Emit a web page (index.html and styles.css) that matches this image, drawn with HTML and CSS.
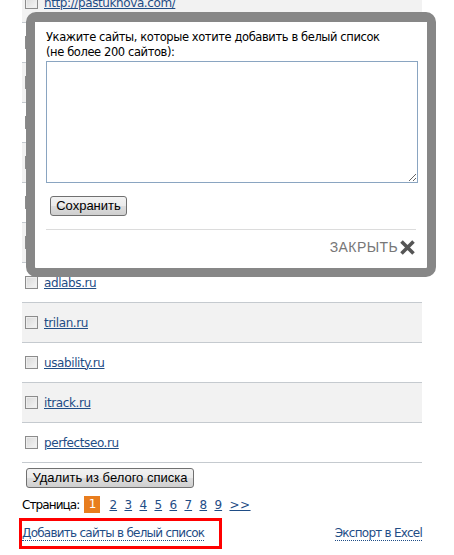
FILE: index.html
```html
<!DOCTYPE html>
<html>
<head>
<meta charset="utf-8">
<link rel="stylesheet" href="styles.css">
</head>
<body>
<div class="page">
  <div class="list">
    <div class="row alt"><span class="cb"></span><a href="#">http://pastukhova.com/</a></div>
    <div class="row"><span class="cb"></span><a href="#">seonews.ru</a></div>
    <div class="row alt"><span class="cb"></span><a href="#">searchengines.ru</a></div>
    <div class="row"><span class="cb"></span><a href="#">webplanet.ru</a></div>
    <div class="row alt"><span class="cb"></span><a href="#">habrahabr.ru</a></div>
    <div class="row"><span class="cb"></span><a href="#">seoprofi.ru</a></div>
    <div class="row alt"><span class="cb"></span><a href="#">optimization.ru</a></div>
    <div class="row"><span class="cb"></span><a href="#">adlabs.ru</a></div>
    <div class="row alt"><span class="cb"></span><a href="#">trilan.ru</a></div>
    <div class="row"><span class="cb"></span><a href="#">usability.ru</a></div>
    <div class="row alt"><span class="cb"></span><a href="#">itrack.ru</a></div>
    <div class="row"><span class="cb"></span><a href="#">perfectseo.ru</a></div>
  </div>
  <button class="btn btn-del">Удалить из белого списка</button>
  <div class="pager">
    <span class="pager-label">Страница:</span>
    <span class="cur">1</span>
    <a href="#">2</a><a href="#">3</a><a href="#">4</a><a href="#">5</a><a href="#">6</a><a href="#">7</a><a href="#">8</a><a href="#">9</a><a class="next" href="#">&gt;&gt;</a>
  </div>
  <div class="bottom">
    <span class="hl"><a class="dotted" href="#">Добавить сайты в белый список</a></span>
    <a class="dotted" href="#">Экспорт в Excel</a>
  </div>
</div>

<div class="modal">
  <div class="modal-inner">
    <p class="prompt">Укажите сайты, которые хотите добавить в белый список<br>(не более 200 сайтов):</p>
    <textarea class="sites"></textarea>
    <button class="btn btn-save">Сохранить</button>
    <div class="modal-foot">
      <span class="close">ЗАКРЫТЬ</span>
      <svg class="x" width="17" height="15" viewBox="0 0 17 15"><path d="M2.5 1.5 L14.5 13.5 M14.5 1.5 L2.5 13.5" stroke="#555" stroke-width="3.6" stroke-linecap="butt"/></svg>
    </div>
  </div>
</div>
</body>
</html>
```

FILE: styles.css
```css
html, body {
  margin: 0;
  padding: 0;
  background: #fff;
  overflow: hidden;
}
body {
  font-family: Tahoma, "DejaVu Sans", sans-serif;
  font-size: 12px;
  color: #000;
  position: relative;
  height: 555px;
}
a {
  color: #1f4d86;
}
.page {
  margin-top: -17px;
  padding-left: 22px;
  width: 400px;
}
.row {
  height: 39px;
  border-bottom: 1px solid #c5cacf;
  display: flex;
  align-items: center;
  gap: 6px;
  padding-left: 3px;
  background: #fff;
}
.row.alt {
  background: #f2f2f2;
}
.row a {
  font-size: 12px;
  letter-spacing: -0.4px;
}
.cb {
  width: 11px;
  height: 11px;
  border: 1px solid #8c8c8c;
  background: linear-gradient(135deg, #d8d8d8, #f6f6f6);
  box-shadow: inset 0 0 0 1px #eee;
  flex: none;
}
.btn {
  font-family: "Liberation Sans", Arial, sans-serif;
  font-size: 13px;
  color: #000;
  border: 1px solid #707070;
  border-radius: 3px;
  background: linear-gradient(#f2f2f2 0%, #ebebeb 50%, #dddddd 51%, #cfcfcf 100%);
  padding: 0 5px;
  height: 20px;
  line-height: 18px;
}
.btn-del {
  display: block;
  margin: 5px 0 0 4px;
  width: 168px;
}
.pager {
  display: flex;
  align-items: center;
  margin-top: 8px;
  height: 17px;
  font-size: 12px;
}
.pager-label {
  flex: none;
  letter-spacing: -0.9px;
  margin-right: 5px;
}
.cur {
  flex: none;
  display: inline-block;
  width: 16px;
  height: 17px;
  line-height: 17px;
  text-align: center;
  background: #e87d1e;
  color: #fff;
  margin-right: 9px;
}
.pager a {
  flex: none;
  display: inline-block;
  width: 15px;
}
.pager a.next {
  width: auto;
  letter-spacing: 0.5px;
}
.bottom {
  display: flex;
  justify-content: space-between;
  align-items: center;
  margin: 5px 0 0 -3px;
  width: 403px;
}
.hl {
  border: 3px solid #ff0000;
  padding: 5px 0 6px 0;
  width: 197px;
  white-space: nowrap;
}
.dotted {
  text-decoration: none;
  border-bottom: 1px dotted #1f4d86;
  letter-spacing: -0.75px;
  white-space: nowrap;
}
.modal {
  position: absolute;
  left: 26px;
  top: 12px;
  width: 392px;
  height: 246px;
  border: 9px solid #878787;
  border-top-width: 10px;
  border-radius: 10px;
  background: #fff;
}
.modal-inner {
  padding: 8px 9px 0 11px;
}
.prompt {
  margin: 0;
  font-size: 11.5px;
  line-height: 15px;
  letter-spacing: -0.4px;
}
.sites {
  display: block;
  box-sizing: border-box;
  width: 372px;
  height: 122px;
  margin: 1px 0 0 0;
  border: 1px solid #8aa5c1;
  resize: both;
}
.btn-save {
  display: block;
  margin: 13px 0 0 4px;
  width: 77px;
}
.modal-foot {
  margin-top: 13px;
  border-top: 1px solid #dcdcdc;
  width: 370px;
  display: flex;
  justify-content: flex-end;
  align-items: center;
  padding-top: 9px;
}
.close {
  font-family: "Liberation Sans", Arial, sans-serif;
  font-size: 14px;
  color: #777;
  letter-spacing: 0.4px;
}
.x {
  display: block;
  margin-left: 1px;
}
```
